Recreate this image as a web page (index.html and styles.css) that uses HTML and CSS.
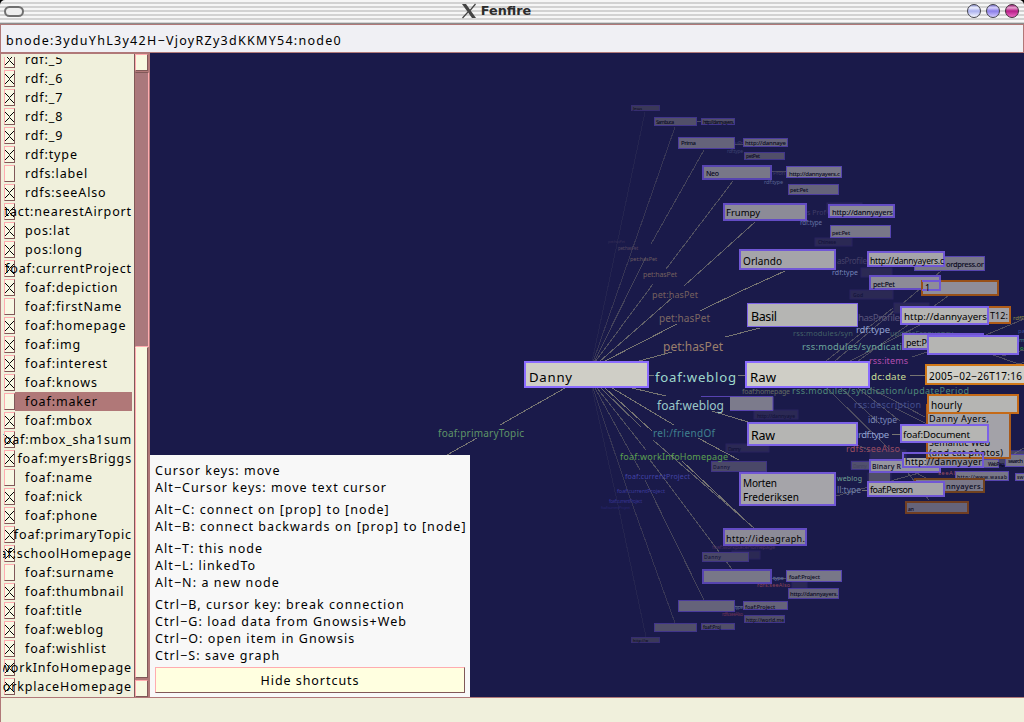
FILE: index.html
```html
<!DOCTYPE html>
<html lang="en">
<head>
<meta charset="utf-8">
<title>Fenfire</title>
<link rel="stylesheet" href="styles.css">
</head>
<body>
<div class="window">
<header class="titlebar">
  <span class="menu-button"></span>
  <h1 class="title"><svg width="16" height="16" viewBox="0 0 16 16"><path d="M1 1h4l10 14h-4z" fill="#444"/><path d="M14.500 1L9 7.500M7 9L1.500 15" stroke="#444" stroke-width="1.200"/></svg>Fenfire</h1>
  <svg class="orbs" width="54" height="18" viewBox="0 0 54 18">
    <defs>
      <linearGradient id="g1" x2="0" y2="1"><stop stop-color="#7d84c8"/><stop offset=".25" stop-color="#eef0ff"/><stop offset=".5" stop-color="#aab0ee"/><stop offset="1" stop-color="#fafcff"/></linearGradient>
      <linearGradient id="g2" x2="0" y2="1"><stop stop-color="#6a60c0"/><stop offset=".25" stop-color="#d8d2ff"/><stop offset=".5" stop-color="#8a7de8"/><stop offset="1" stop-color="#d6ceff"/></linearGradient>
      <linearGradient id="g3" x2="0" y2="1"><stop stop-color="#8a1068"/><stop offset=".25" stop-color="#e8a0d0"/><stop offset=".5" stop-color="#b81e88"/><stop offset="1" stop-color="#f070c8"/></linearGradient>
    </defs>
    <circle cx="8" cy="9" r="6.500" fill="url(#g1)" stroke="#44444c"/>
    <circle cx="27" cy="9" r="6.500" fill="url(#g2)" stroke="#44444c"/>
    <circle cx="46" cy="9" r="6.500" fill="url(#g3)" stroke="#44303c"/>
  </svg>
</header>
<div class="address">bnode:3yduYhL3y42H−VjoyRZy3dKKMY54:node0</div>
<main class="main">
  <aside class="sidebar">
    <div class="clip"><ul class="props">
      <li><i class="box on"></i><span>rdf:_5</span></li>
      <li><i class="box on"></i><span>rdf:_6</span></li>
      <li><i class="box on"></i><span>rdf:_7</span></li>
      <li><i class="box on"></i><span>rdf:_8</span></li>
      <li><i class="box on"></i><span>rdf:_9</span></li>
      <li><i class="box on"></i><span>rdf:type</span></li>
      <li><i class="box"></i><span>rdfs:label</span></li>
      <li><i class="box on"></i><span>rdfs:seeAlso</span></li>
      <li class="long"><i class="box on"></i><span>contact:nearestAirport</span></li>
      <li><i class="box on"></i><span>pos:lat</span></li>
      <li><i class="box on"></i><span>pos:long</span></li>
      <li class="long"><i class="box on"></i><span>foaf:currentProject</span></li>
      <li><i class="box on"></i><span>foaf:depiction</span></li>
      <li><i class="box"></i><span>foaf:firstName</span></li>
      <li><i class="box on"></i><span>foaf:homepage</span></li>
      <li><i class="box on"></i><span>foaf:img</span></li>
      <li><i class="box on"></i><span>foaf:interest</span></li>
      <li><i class="box on"></i><span>foaf:knows</span></li>
      <li class="selected"><i class="box"></i><span>foaf:maker</span></li>
      <li><i class="box on"></i><span>foaf:mbox</span></li>
      <li class="long"><i class="box on"></i><span>foaf:mbox_sha1sum</span></li>
      <li class="long"><i class="box on"></i><span>foaf:myersBriggs</span></li>
      <li><i class="box"></i><span>foaf:name</span></li>
      <li><i class="box on"></i><span>foaf:nick</span></li>
      <li><i class="box on"></i><span>foaf:phone</span></li>
      <li class="long"><i class="box on"></i><span>foaf:primaryTopic</span></li>
      <li class="long"><i class="box on"></i><span>foaf:schoolHomepage</span></li>
      <li><i class="box"></i><span>foaf:surname</span></li>
      <li><i class="box on"></i><span>foaf:thumbnail</span></li>
      <li><i class="box on"></i><span>foaf:title</span></li>
      <li><i class="box on"></i><span>foaf:weblog</span></li>
      <li><i class="box on"></i><span>foaf:wishlist</span></li>
      <li class="long"><i class="box on"></i><span>foaf:workInfoHomepage</span></li>
      <li class="long"><i class="box on"></i><span>foaf:workplaceHomepage</span></li>
    </ul></div>
    <div class="scrollbar"><b class="arrow"></b><b class="thumb"></b><b class="track"></b><b class="arrow"></b></div>
  </aside>
  <section class="canvas">
    <svg class="graph" width="874" height="644" viewBox="150 53 874 644">
      <g class="edges">
        <path opacity=".12" d="M592 362L645 112M592 388L618 505L646 637"/>
        <path opacity=".3" d="M593 362L675 127M593 388L629 495L675 623"/>
        <path opacity=".45" d="M594 362L646 257M651 244L704 150M595 388L640 470M645 480L704 600"/>
        <path opacity=".6" d="M595 362L653 284M666 269L733 181M597 388L646 450M650 460L732 569"/>
        <path opacity=".8" d="M599 362L672 298M684 286L755 222M601 388L641 427M653 440L754 528"/>
        <path d="M603 362L677 324M700 311L739 292L785 271M605 388L652 431M682 461L745 520"/>
        <path d="M639 361L672 352M725 337L760 328M632 388L666 396M712 411L748 422M612 388L674 425M698 438L739 460M565 388L500 425M477 438L447 455"/>
        <path d="M649 375.500H654M738 375.500H745M910 375.500H925M892 434.500H900M862 490.500H867"/>
      </g>
      <g class="edges faint">
        <path d="M826 361L893 308M835 361L941 271M850 361L930 320M858 361L948 296M912 357L946 346M827 388L890 450L929 500M841 388L880 424M858 388L900 421M870 388L925 417M895 408L927 424M860 446L930 480M950 350L1024 319M1002 356L1024 350M970 385L1024 362M985 352L1024 366M800 506L930 470M1012 455L1024 448"/>
        <path d="M735 144H743M697 121H701M772 171H786M772 578H786M735 606H743"/>
      </g>
      <g class="ghost">
        <rect x="827" y="203" width="35" height="10"/><rect x="815" y="238" width="37" height="8"/><rect x="861" y="268" width="31" height="9"/><rect x="850" y="290" width="43" height="9"/><rect x="894" y="303" width="35" height="10"/>
        <rect x="754" y="410" width="44" height="9"/><rect x="726" y="444" width="43" height="8"/><rect x="870" y="450" width="36" height="9"/><rect x="851" y="461" width="30" height="8"/><rect x="868" y="473" width="23" height="8"/><rect x="792" y="582" width="15" height="6"/><rect x="732" y="551" width="28" height="8"/>
      </g>
      <g class="mist"><rect x="711.500" y="461.500" width="55" height="10"/><rect x="702.500" y="552.500" width="46" height="9"/></g>
      <g class="tiny dark">
        <text x="853" y="297" textLength="10">God</text><text x="818" y="244" textLength="18">Chinese</text><text x="757" y="418" textLength="38">http://dannyaye</text><text x="728" y="451" textLength="13">Danny</text><text x="713" y="469" textLength="17">Danny</text><text x="704" y="559" textLength="17">Danny</text><text x="853" y="468" textLength="14">Danny</text>
      </g>

      <!-- property labels -->
      <g class="prop">
        <text x="655" y="382" font-size="13.200" textLength="81" fill="#9fd8cc">foaf:weblog</text>
        <text x="657" y="410" font-size="12" textLength="67" fill="#9cc8c8">foaf:weblog</text>
        <text x="663" y="351" font-size="12" textLength="60" fill="#9a7f6c">pet:hasPet</text>
        <text x="659" y="322" font-size="10" textLength="51" fill="#7d6863">pet:hasPet</text>
        <text x="652" y="298" font-size="9" textLength="46" fill="#75605f">pet:hasPet</text>
        <text x="643" y="277" font-size="7" textLength="34" fill="#75605f">pet:hasPet</text>
        <text x="630" y="261" font-size="5.500" textLength="27" fill="#6b5a60">pet:hasPet</text>
        <text x="618" y="250" font-size="4.500" textLength="20" fill="#544760">pet:hasPet</text>
        <text x="608" y="243" font-size="4" textLength="17" fill="#383058">pet:hasPet</text>
        <text x="438" y="437" font-size="10" textLength="86" fill="#5f9468">foaf:primaryTopic</text>
        <text x="653" y="437" font-size="10" textLength="62" fill="#40808e">rel:/friendOf</text>
        <text x="620" y="460" font-size="9" textLength="108" fill="#5ca050">foaf:workInfoHomepage</text>
        <text x="625" y="479" font-size="7" textLength="65" fill="#4444a8">foaf:currentProject</text>
        <text x="617" y="493" font-size="5.500" textLength="48" fill="#3c3a9c">foaf:currentProject</text>
        <text x="609" y="503" font-size="4.500" textLength="33" fill="#353390">foaf:currentProject</text>
        <text x="601" y="509" font-size="4" textLength="29" fill="#282670">foaf:currentProject</text>
        <text x="858" y="321" font-size="9.800" textLength="42" fill="#5b557c">hasProfile</text>
        <text x="856" y="333" font-size="9.500" textLength="34" fill="#91a0d0">rdf:type</text>
        <text x="793" y="336" font-size="7.500" textLength="60" fill="#426068">rss:modules/syn</text>
        <text x="890" y="336" font-size="7.500" textLength="63" fill="#426068">updateFrequency</text>
        <text x="802" y="350" font-size="9.300" textLength="100" fill="#6ca69c">rss:modules/syndicati</text>
        <text x="869" y="364" font-size="9" textLength="39" fill="#b34eb0">rss:items</text>
        <text x="871" y="380" font-size="9.800" textLength="35" fill="#c8dc94">dc:date</text>
        <text x="742" y="394" font-size="7" textLength="48" fill="#646d64">foaf:homepage</text>
        <text x="792" y="394" font-size="9" textLength="177" fill="#4f8779">rss:modules/syndication/updatePeriod</text>
        <text x="854" y="408" font-size="9" textLength="67" fill="#444e8d">rss:description</text>
        <text x="868" y="423" font-size="8.500" textLength="29" fill="#7784b6">idl:type</text>
        <text x="858" y="438" font-size="9.500" textLength="31" fill="#91a0d0">rdf:type</text>
        <text x="846" y="452" font-size="9" textLength="54" fill="#994d60">rdfs:seeAlso</text>
        <text x="837" y="481" font-size="7" textLength="25" fill="#74a294">weblog</text>
        <text x="837" y="493" font-size="8.500" textLength="24" fill="#7080aa">ll:type</text>
        <text x="837" y="264" font-size="8" textLength="30" fill="#454068">asProfile</text>
        <text x="832" y="275" font-size="7" textLength="26" fill="#7283b8">rdf:type</text>
        <text x="807" y="215" font-size="7" textLength="19" fill="#403d69">s Prof</text>
        <text x="800" y="225" font-size="6.200" textLength="22" fill="#6572a5">rdf:type</text>
        <text x="773" y="175" font-size="6" textLength="12" fill="#403d69">Profi</text>
        <text x="764" y="184" font-size="5.500" textLength="19" fill="#576392">rdf:type</text>
        <text x="735" y="145" font-size="5.500" textLength="8" fill="#403d69">uPr</text>
        <text x="727" y="153" font-size="5" textLength="16" fill="#3a4170">rdf:type</text>
        <text x="712" y="549" font-size="5.500" textLength="63" fill="#4a305f">foaf:workplaceHomepage</text>
        <text x="773" y="580" font-size="6" textLength="11" fill="#6572a5">type</text>
        <text x="757" y="587" font-size="5.500" textLength="33" fill="#8d4358">rdfs:seeAlso</text>
        <text x="735" y="609" font-size="5" textLength="8" fill="#576392">type</text>
        <text x="722" y="616" font-size="4.500" textLength="21" fill="#6c3354">rdfs:seeAlso</text>
        <text x="1013" y="320" font-size="6" textLength="14" fill="#8a8a46">rdfPr</text><text x="1018" y="333" font-size="6" fill="#3d4c98">pa</text><text x="1019" y="342" font-size="6" fill="#4b8b8e">m</text><text x="1020" y="350" font-size="6" fill="#33b040">o</text>
      </g>

      <!-- distant nodes -->
      <g class="n5"><rect x="631.500" y="105.500" width="28" height="5"/><rect x="631.500" y="637.500" width="28" height="5"/></g>
      <g class="n4"><rect x="654.500" y="117.500" width="42" height="8"/><rect x="701.500" y="118.500" width="33" height="6"/><rect x="744.500" y="152.500" width="40" height="7"/><rect x="654.500" y="623.500" width="42" height="8"/><rect x="701.500" y="623.500" width="33" height="6"/><rect x="744.500" y="615.500" width="40" height="7"/></g>
      <rect x="730" y="397" width="43" height="13" fill="#7c7b8c"/><path d="M701 396.500H773V410.500H730" class="shade"/>
      <g class="n3"><rect x="678.500" y="137.500" width="56" height="11"/><rect x="743.500" y="138.500" width="44" height="8"/><rect x="788.500" y="184.500" width="50" height="10"/><rect x="678.500" y="600.500" width="56" height="11"/><rect x="743.500" y="601.500" width="44" height="8"/><rect x="788.500" y="588.500" width="50" height="10"/></g>
      <g class="n2"><rect x="703" y="166" width="68" height="13" class="b2"/><rect x="786.500" y="166.500" width="55" height="11"/><rect x="830.500" y="225.500" width="60" height="12"/><rect x="703" y="570" width="68" height="13" class="b2"/><rect x="786.500" y="570.500" width="55" height="11"/><rect x="914.500" y="256.500" width="70" height="14"/></g>
      <g class="n1"><rect x="724" y="204" width="82" height="16"/><rect x="829" y="205" width="65" height="12"/><rect x="724" y="529" width="82" height="16"/><rect x="870" y="276" width="70" height="13"/></g>
      <g class="tiny">
        <text x="633" y="110" textLength="9" font-size="3.500">Jesus</text><text x="633" y="642" textLength="15" font-size="3.500">http://w</text>
        <text x="656" y="124" textLength="18">Sambuca</text><text x="703" y="123.500" textLength="31">http://dannyayers.</text>
        <text x="681" y="145" textLength="15" font-size="6">Prima</text><text x="745" y="145" textLength="41" font-size="6">http://dannaye</text><text x="746" y="158" textLength="14">petPet</text>
        <text x="706" y="176" textLength="13" font-size="7">Neo</text><text x="789" y="175.500" textLength="51" font-size="6">http://dannyayers.c</text><text x="790" y="192" textLength="18" font-size="5.500">pet:Pet</text>
        <text x="832" y="235" textLength="18" font-size="5.500">pet:Pet</text><text x="832" y="215" textLength="61" font-size="7.500">http://dannyayers</text>
        <text x="789" y="579" textLength="31" font-size="5.800">foaf:Project</text><text x="790" y="596" textLength="48" font-size="5.800">http://dannyayers.</text><text x="745" y="609" textLength="30" font-size="5.500">foaf:Project</text><text x="746" y="621.500" textLength="38">http://world.me</text><text x="703" y="628.500" textLength="18" font-size="4.500">foaf:Proj</text>
        <text x="946" y="267" textLength="38" font-size="7.500">ordpress.or</text><text x="873" y="287" textLength="22" font-size="7">pet:Pet</text>
      </g>

      <!-- lower right cluster -->
      <g class="n2">
        <rect x="851.500" y="461.500" width="28" height="8" opacity=".5"/><rect x="955.500" y="450.500" width="69" height="14" opacity=".45"/><rect x="935.500" y="459.500" width="63" height="8"/><rect x="955.500" y="471.500" width="53" height="9"/><rect x="1005.500" y="454.500" width="22" height="12"/><rect x="1015.500" y="473.500" width="12" height="7"/>
        <rect x="870" y="460" width="70" height="12" class="b2 light"/>
      </g>
      <g class="tiny"><text x="872" y="469" textLength="29" font-size="7">Binary R</text><text x="957" y="479" textLength="50">http://www.wasab</text><text x="988" y="466" textLength="16">WebPag</text><text x="1008" y="463" textLength="15" font-size="6">search</text><text x="1017" y="479">sw</text></g>
      <rect x="869" y="473" width="21" height="9" fill="#514f69"/>
      <g class="orange"><rect x="915" y="479" width="69" height="13" fill="#7a7888" stroke="#70411f"/><rect x="906" y="502" width="62" height="11" fill="#65637a" stroke="#713e22"/></g>
      <g class="tiny"><text x="946" y="489" textLength="37" font-size="7.500">nnyayers.</text><text x="908" y="511" textLength="6">an</text></g>
      <text x="938" y="475" textLength="17" font-size="6" fill="#994d60">seeAl</text>
      <rect x="868" y="482" width="76" height="14" class="a"/><text x="870" y="493" textLength="43" font-size="9">foaf:Person</text>

      <!-- main nodes -->
      <rect x="740" y="250" width="95" height="19" class="a"/><text x="743" y="265" font-size="10" textLength="39">Orlando</text>
      <rect x="740" y="473" width="95" height="32" class="a"/><text x="743" y="487" font-size="10" textLength="34">Morten</text><text x="743" y="501" font-size="10" textLength="56">Frederiksen</text>
      <text x="726" y="216" font-size="9.500" textLength="34">Frumpy</text><text x="726" y="542" font-size="9" textLength="79">http://ideagraph.</text>
      <rect x="868" y="252" width="76" height="14" class="a"/><text x="870" y="264" font-size="8.500" textLength="74">http://dannyayers.c</text>
      <g class="orange"><rect x="922" y="281" width="76" height="14" fill="#8f8d99" stroke="#985019"/><rect x="921" y="307" width="89" height="16" fill="#a3a2a8" stroke="#b05c18"/></g>
      <path d="M922 281H940V290H922" class="frame"/><text x="925" y="291" font-size="9">1</text><text x="990" y="319" font-size="9" textLength="18">T12:</text>
      <rect x="747.500" y="303.500" width="110" height="23" class="b thin"/><text x="751" y="321" font-size="12.500" textLength="26">Basil</text>
      <rect x="901" y="307" width="87" height="17" class="b"/><text x="904" y="320" font-size="9.800" textLength="83">http://dannyayers</text>
      <rect x="903" y="334" width="80" height="15" class="a"/><text x="906" y="346" font-size="9" textLength="21">pet:P</text><rect x="928" y="336" width="90" height="18" class="b"/>
      <rect x="748" y="423" width="109" height="22" class="b"/><text x="751" y="440" font-size="12.500" textLength="24">Raw</text>
      <g class="orange"><rect x="926" y="365" width="100" height="19" fill="#cfcec6" stroke="#d07818"/><rect x="927" y="405" width="83" height="53" fill="#a3a2a8" stroke="#a85818"/><rect x="928" y="395" width="90" height="18" fill="#b5b5b3" stroke="#c56a18"/></g>
      <text x="929" y="380" font-size="10" textLength="93">2005−02−26T17:16</text><text x="931" y="409" font-size="10" textLength="31">hourly</text>
      <text x="929" y="421.500" font-size="9" textLength="60">Danny Ayers,</text><text x="929" y="446" font-size="9" textLength="61">Semantic Web</text><text x="929" y="456" font-size="9" textLength="74">(and cat photos)</text>
      <rect x="901" y="425" width="87" height="17" class="b"/><text x="903" y="438" font-size="9.800" textLength="67">foaf:Document</text>
      <path d="M903 458H926V467H903z" fill="#a5a4a9"/><path d="M926 459H983V467H926z" fill="#8c8b97"/><path d="M903 453H983V467H903z" class="frame"/><text x="905" y="465" font-size="9" textLength="77">http://dannyayer</text>
      <rect x="525" y="362" width="123" height="25" class="c"/><text x="529" y="382" font-size="13.200" textLength="43">Danny</text>
      <rect x="746" y="362" width="123" height="25" class="c"/><text x="750" y="382" font-size="13.200" textLength="26">Raw</text>
    </svg>
    <div class="help">
      <p>Cursor keys: move<br>Alt−Cursor keys: move text cursor</p>
      <p>Alt−C: connect on [prop] to [node]<br>Alt−B: connect backwards on [prop] to [node]</p>
      <p>Alt−T: this node<br>Alt−L: linkedTo<br>Alt−N: a new node</p>
      <p>Ctrl−B, cursor key: break connection<br>Ctrl−G: load data from Gnowsis+Web<br>Ctrl−O: open item in Gnowsis<br>Ctrl−S: save graph</p>
      <button class="hide">Hide shortcuts</button>
    </div>
  </section>
</main>
<footer class="status"></footer>
</div>
</body>
</html>
```
FILE: styles.css
```css
* { box-sizing: border-box; }
body { margin: 0; background: #000; font: 12.5px/17px "Noto Sans", sans-serif; letter-spacing: .87px; color: #000; }
.window { width: 1024px; height: 722px; display: flex; flex-direction: column; overflow: hidden; }
.titlebar { height: 24px; flex: none; display: grid; grid-template-columns: 1fr auto 1fr; align-items: center; padding: 0 4px 1px 4px; border-bottom: 1px solid #8c8c8c; border-radius: 5px 5px 0 0; background: repeating-linear-gradient(#f6f6f6 0 2px, #d2d2d2 2px 4px); }
.menu-button { width: 20px; height: 11px; border: 2px solid #707070; border-radius: 6px; background: #eee; }
.title { margin: 0 32px 0 0; display: flex; align-items: center; gap: 4px; font: bold 13px/16px "DejaVu Sans", sans-serif; font-size: 12.8px; letter-spacing: 0; color: #2c2c2c; }
.orbs { justify-self: end; }
.address { height: 29px; flex: none; padding: 7px 5px; border: 1px solid #b07878; background: #f0f0f4; letter-spacing: 1.28px; }
.main { height: 644px; flex: none; display: flex; }
.sidebar { width: 150px; flex: none; display: flex; padding-top: 3px; background: #f0f0dc; border: 1px solid #b07878; border-width: 1px 1px 0 1px; }
.clip { width: 133px; height: 640px; overflow: hidden; padding-left: 2px; }
.props { list-style: none; margin: -7px 0 0; padding: 0; width: 129px; overflow: hidden; }
.props li { height: 19px; display: flex; align-items: center; }
.props span { margin-left: 5px; padding-left: 5px; line-height: 19px; white-space: nowrap; flex: 1; }
.props .long span { margin: 0 0 0 -11px; padding: 0; display: flex; justify-content: flex-end; min-width: 0; }
.props .selected span { background: #b07878; margin-left: 0; padding-left: 10px; }
.box { width: 11px; height: 17px; flex: none; border: 1px solid; border-color: #ffacb0 #805858 #805858 #ffacb0; background: #f8f8e4; margin-left: 1px; }
.box.on { background: linear-gradient(to top right, transparent 47%, #000 48% 52%, transparent 53%) 0 3px / 9px 10px no-repeat, linear-gradient(to bottom right, transparent 47%, #000 48% 52%, transparent 53%) 0 3px / 9px 10px no-repeat, #f8f8e4; }
.scrollbar { width: 15px; margin-top: -3px; display: flex; flex-direction: column; background: #b07878; border-left: 1px solid #805858; }
.arrow { height: 17px; border: 1px solid; border-color: #ffacb0 #805858 #805858 #ffacb0; background: #f8f8e0; margin-right: 1px; }
.thumb { height: 275px; margin-top: 1px; border: 1px solid; border-color: #805858 #ffacb0 #ffacb0 #b07878; background: #aa787c; }
.track { flex: 1; margin: 0 1px 2px 0; border: 1px solid; border-color: #f8f8e0 #805858 #805858 #ffacb0; background: #f8f8e0; }
.canvas { width: 874px; position: relative; background: #1a1a4a; }
.graph { display: block; font-family: "Noto Sans", sans-serif; letter-spacing: 0; }
.edges path { fill: none; stroke: #777572; shape-rendering: crispEdges; }
.edges.faint { opacity: .55; }
.ghost rect { fill: #2b2954; stroke: #28235f; }
.mist rect { fill: #4a4868; stroke: #3f3384; }
.tiny { font-size: 5px; fill: #080820; font-weight: 500; }
.tiny.dark { fill: #12123a; }
.shade, .frame { fill: none; stroke: #5743b1; }
.frame { stroke: #7058d6; stroke-width: 2; }
.n5 rect { fill: #3a3858; stroke: #362d70; }
.n4 rect { fill: #514f69; stroke: #41358b; }
.n3 rect { fill: #65637a; stroke: #4b3b9d; }
.n2 rect { fill: #787788; stroke: #5644b0; }
.n2 .light { fill: #9695a0; stroke: #6c54ce; }
.n2 .b2, .n1 rect, .orange rect { stroke-width: 2; }
.n1 rect { fill: #8c8b97; stroke: #634cc4; }
.a { fill: #a5a4a9; stroke: #7157d5; stroke-width: 2; }
.b { fill: #b5b5b3; stroke: #7c62e7; stroke-width: 2; }
.thin { stroke-width: 1; }
.c { fill: #cfcec6; stroke: #8b6cff; stroke-width: 2; }
.help { position: absolute; left: 0; bottom: 0; width: 320px; height: 242px; padding: 7px 5px 5px; background: #f8f8f8; white-space: nowrap; letter-spacing: 1.06px; }
.help p { margin: 0 0 5px; }
.hide { display: block; width: 310px; height: 26px; margin-top: -2px; border: 1px solid; border-color: #ffacb0 #805858 #805858 #ffacb0; background: #ffffe0; font: inherit; letter-spacing: .95px; color: #000; }
.status { height: 25px; flex: none; background: #f0f0dc; border: 1px solid #b07878; border-width: 1px 0 0 1px; }
```
